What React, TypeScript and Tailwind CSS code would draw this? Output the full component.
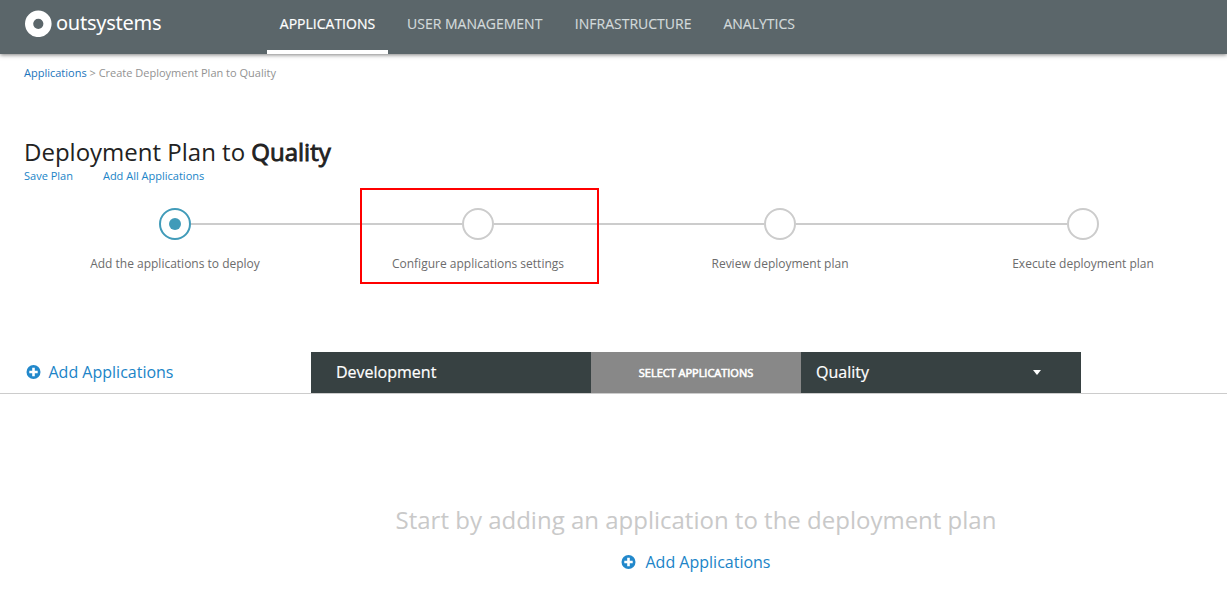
const Plus = () => (
  <svg width="15" height="14" viewBox="0 0 15 14" className="shrink-0">
    <circle cx="7.5" cy="7" r="7" fill="#2288cb" />
    <path d="M7.5 2.8v8.4M3.3 7h8.4" stroke="white" strokeWidth="2.6" />
  </svg>
);

const tabs = [
  { label: "APPLICATIONS", cls: "w-[121px] text-white border-b-4 border-white [-webkit-text-stroke:0.2px_white]" },
  { label: "USER MANAGEMENT", cls: "ml-[19px] text-[#d3dadb] [-webkit-text-stroke:0.15px_#d3dadb]" },
  { label: "INFRASTRUCTURE", cls: "ml-[32.5px] text-[#d3dadb] [-webkit-text-stroke:0.15px_#d3dadb]" },
  { label: "ANALYTICS", cls: "ml-8 text-[#d3dadb] [-webkit-text-stroke:0.15px_#d3dadb]" },
];

const steps = [
  { label: "Add the applications to deploy", cls: "w-[302px]" },
  { label: "Configure applications settings", cls: "w-[304px]" },
  { label: "Review deployment plan", cls: "w-[300px]" },
  { label: "Execute deployment plan", cls: "w-[306px]" },
];

export default function App() {
  return (
    <div className="relative h-[608px] w-[1227px] overflow-hidden bg-white font-['Open_Sans',sans-serif] text-[#333]">
      <header className="flex h-[54px] bg-[#5b666a] shadow-[0_1px_4px_rgba(0,0,0,0.5)]">
        <div className="flex h-[46px] w-[267px] items-start gap-[4px] pl-[25px]">
          <svg width="27" height="27" viewBox="0 0 27 27" className="mt-[10px]">
            <circle cx="13.3" cy="13.8" r="9.2" fill="none" stroke="white" strokeWidth="8.2" />
          </svg>
          <span className="mt-[8px] font-['Noto_Sans',sans-serif] text-[20px] leading-[30px] tracking-[-0.25px] text-white">outsystems</span>
        </div>
        <nav className="flex text-[14px]">
          {tabs.map((t) => (
            <a key={t.label} className={"flex h-[54px] justify-center whitespace-nowrap pt-[13px] leading-[22px] " + t.cls}>{t.label}</a>
          ))}
        </nav>
      </header>
      <main>
        <div className="h-[83px] pl-6 pt-[11px] text-[11px] leading-4 text-[#929292]">
          <a className="text-[#1b75bb]">Applications</a> &gt; Create Deployment Plan to Quality
        </div>
        <h1 className="h-[31px] pl-6 text-[24px] leading-[30px] text-[#222]">
          Deployment Plan to <span className="[-webkit-text-stroke:0.9px_#222]">Quality</span>
        </h1>
        <div className="flex h-[40px] gap-[30px] pl-6 text-[11px] leading-4 text-[#2084c7]">
          <a>Save Plan</a>
          <a>Add All Applications</a>
        </div>
        <div className="flex h-[144px] pl-6">
          {steps.map((s, i) => (
            <div key={s.label} className={"flex shrink-0 flex-col items-center " + s.cls}>
              <div className="flex w-full items-center">
                <div className={"h-[2px] flex-1 " + (i ? "bg-[#ccc]" : "")} />
                <div className={"flex size-8 items-center justify-center rounded-full border-2 " + (i ? "border-[#ccc]" : "border-[#419bb9]")}>
                  {!i && <div className="size-3 rounded-full bg-[#419bb9]" />}
                </div>
                <div className={"h-[2px] flex-1 " + (i < 3 ? "bg-[#ccc]" : "")} />
              </div>
              <div className="mt-[15px] whitespace-nowrap text-[12px] leading-[18px] text-[#6c6c6c]">{s.label}</div>
            </div>
          ))}
        </div>
        <div className="flex h-[42px] border-b border-[#ccc] text-[16px] leading-[40px]">
          <a className="flex h-10 w-[311px] items-center gap-[7.5px] pl-[26px] text-[#2084c7]"><Plus />Add Applications</a>
          <div className="w-[280px] bg-[#374142] pl-[25px] text-white [-webkit-text-stroke:0.2px_white]">Development</div>
          <div className="w-[210px] bg-[#888] text-center text-[11px] leading-[42px] tracking-[-0.02px] text-white [-webkit-text-stroke:0.6px_white]">SELECT APPLICATIONS</div>
          <div className="flex w-[280px] justify-between bg-[#374142] pl-[15px] pr-[40px] text-white [-webkit-text-stroke:0.2px_white]">
            Quality
            <svg width="8" height="5" className="mt-[18px]"><path d="M0 0h8L4 5z" fill="white" stroke="none" /></svg>
          </div>
        </div>
        <div className="mt-[108px] pl-[165px] text-center text-[24px] leading-[36px] text-[#c9c9c9]">Start by adding an application to the deployment plan</div>
        <a className="ml-[621px] mt-[12px] flex items-center gap-[9.5px] text-[16px] leading-6 text-[#2084c7]"><Plus />Add Applications</a>
      </main>
      <div className="absolute left-[360px] top-[188px] h-[96px] w-[239px] border-2 border-[#ff0000]" />
    </div>
  );
}
